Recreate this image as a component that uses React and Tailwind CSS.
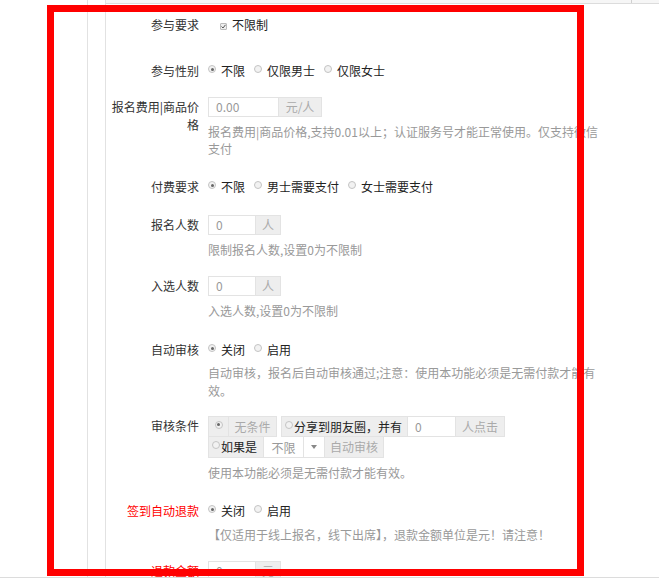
import React from 'react';

const font = { fontFamily: '"Noto Sans CJK SC", "Noto Sans", sans-serif' };

const Radio = ({ checked }) => (
  <span className="inline-flex items-center justify-center w-[8px] h-[8px] rounded-full border border-[#c4c4c4] bg-[#f2f2f2] relative -top-[2px]">
    {checked && <span className="w-[3px] h-[3px] rounded-full bg-[#666]"></span>}
  </span>
);

const RadioItem = ({ checked, label }) => (
  <span className="inline-flex items-center gap-[5px] mr-[9px]">
    <Radio checked={checked} />
    <span className="text-[#222]">{label}</span>
  </span>
);

const Row = ({ label, red, className = '', children }) => (
  <div className={`flex ${className}`}>
    <div className={`w-[93px] shrink-0 text-right pt-[1px] leading-[18px] ${red ? 'text-[#ff0000]' : 'text-[#333]'}`}>
      {label}
    </div>
    <div className="ml-[9px] w-[392px]">{children}</div>
  </div>
);

const Help = ({ className = 'mt-[6px]', children }) => (
  <div className={`text-[#999] leading-[17px] ${className}`}>{children}</div>
);

const InputGroup = ({ value, unit, inputW = 'w-[48px]', unitW = 'w-[25px]' }) => (
  <div className="flex h-[20px]">
    <div className={`${inputW} border border-[#e3e3e3] text-[#999] pl-[7px] leading-[18px]`}>{value}</div>
    <div className={`${unitW} bg-[#eee] border border-l-0 border-[#e3e3e3] text-[#aaa] text-center leading-[18px]`}>{unit}</div>
  </div>
);

export default function App() {
  return (
    <div className="w-[659px] h-[578px] relative overflow-hidden bg-white text-[12px]" style={font}>
      <div className="flex h-[577px]">
        <div className="w-[88px] shrink-0 border-r border-[#e2e2e2]"></div>
        <div className="w-[18px] shrink-0 border-r border-[#e2e2e2]"></div>
        <div className="flex-1 flex flex-col overflow-hidden">
          <div className="h-[4px] shrink-0 bg-[#f6f6f6] border-b border-[#dcdcdc] relative">
            <span className="absolute left-[525px] top-0 h-[3px] w-px bg-[#d0d0d0]"></span>
          </div>
          <div className="pt-[11px]">
            <Row label="参与要求">
              <div className="flex items-center h-[20px] pl-[12px] gap-[5px]">
                <span className="inline-flex items-center justify-center w-[7px] h-[7px] border border-[#bbb] bg-[#eee] rounded-[1px] relative top-[1px]">
                  <svg width="5" height="5" viewBox="0 0 5 5"><path d="M0.5 2.5 L2 4 L4.5 0.8" stroke="#555" strokeWidth="1" fill="none" /></svg>
                </span>
                <span className="text-[#222]">不限制</span>
              </div>
            </Row>

            <Row label="参与性别" className="mt-[26px]">
              <div className="flex items-center h-[20px]">
                <RadioItem checked label="不限" />
                <RadioItem label="仅限男士" />
                <RadioItem label="仅限女士" />
              </div>
            </Row>

            <Row label="报名费用|商品价格" className="mt-[16px]">
              <InputGroup value="0.00" unit="元/人" inputW="w-[71px]" unitW="w-[43px]" />
              <Help>报名费用|商品价格,支持0.01以上；认证服务号才能正常使用。仅支持微信支付</Help>
            </Row>

            <Row label="付费要求" className="mt-[20px]">
              <div className="flex items-center h-[20px]">
                <RadioItem checked label="不限" />
                <RadioItem label="男士需要支付" />
                <RadioItem label="女士需要支付" />
              </div>
            </Row>

            <Row label="报名人数" className="mt-[18px]">
              <InputGroup value="0" unit="人" />
              <Help>限制报名人数,设置0为不限制</Help>
            </Row>

            <Row label="入选人数" className="mt-[18px]">
              <InputGroup value="0" unit="人" />
              <Help>入选人数,设置0为不限制</Help>
            </Row>

            <Row label="自动审核" className="mt-[21px]">
              <div className="flex items-center h-[20px]">
                <RadioItem checked label="关闭" />
                <RadioItem label="启用" />
              </div>
              <Help className="mt-[4px] leading-[18px]">自动审核，报名后自动审核通过;注意：使用本功能必须是无需付款才能有效。</Help>
            </Row>

            <Row label="审核条件" className="mt-[16px]">
              <div className="flex h-[21px]">
                <div className="w-[21px] bg-[#eee] border border-[#e3e3e3] flex items-center justify-center">
                  <Radio checked />
                </div>
                <div className="w-[48px] bg-[#eee] border border-l-0 border-[#e3e3e3] text-[#aaa] text-center leading-[19px] overflow-hidden">无条件</div>
                <div className="w-[4px]"></div>
                <div className="w-[127px] bg-[#eee] border border-[#e3e3e3] flex items-center pl-[3px] text-[#222] whitespace-nowrap">
                  <Radio /><span className="ml-[1px]">分享到朋友圈，并有</span>
                </div>
                <div className="w-[48px] border border-l-0 border-[#e3e3e3] text-[#999] pl-[7px] pt-[1px] leading-[18px]">0</div>
                <div className="w-[49px] bg-[#eee] border border-l-0 border-[#e3e3e3] text-[#aaa] text-center leading-[19px]">人点击</div>
              </div>
              <div className="flex h-[21px]">
                <div className="w-[56px] bg-[#eee] border border-t-0 border-[#e3e3e3] flex items-center pl-[3px] text-[#222] whitespace-nowrap">
                  <Radio /><span className="ml-[1px]">如果是</span>
                </div>
                <div className="w-[60px] border-b border-[#e3e3e3] flex">
                  <div className="w-[40px] border-r border-[#e3e3e3] text-[#999] text-center pt-[2px] leading-[18px]">不限</div>
                  <div className="flex-1 flex items-center justify-center">
                    <span className="w-0 h-0 border-l-[3px] border-r-[3px] border-t-[4px] border-l-transparent border-r-transparent border-t-[#888]"></span>
                  </div>
                </div>
                <div className="w-[60px] bg-[#eee] border border-t-0 border-[#e3e3e3] text-[#aaa] text-center leading-[19px]">自动审核</div>
              </div>
              <Help className="mt-[6px]">使用本功能必须是无需付款才能有效。</Help>
            </Row>

            <Row label="签到自动退款" red className="mt-[20px]">
              <div className="flex items-center h-[20px]">
                <RadioItem checked label="关闭" />
                <RadioItem label="启用" />
              </div>
              <Help className="mt-[5px]">【仅适用于线上报名，线下出席】，退款金额单位是元！请注意！</Help>
            </Row>

            <Row label="退款金额" red className="mt-[18px]">
              <InputGroup value="0" unit="元" />
            </Row>
          </div>
        </div>
      </div>
      <div className="h-px bg-[#dcdcdc]"></div>

      <div className="absolute left-[47px] top-[5px] w-[537px] h-[571px] border-[7px] border-[#ff0000] pointer-events-none"></div>
    </div>
  );
}
